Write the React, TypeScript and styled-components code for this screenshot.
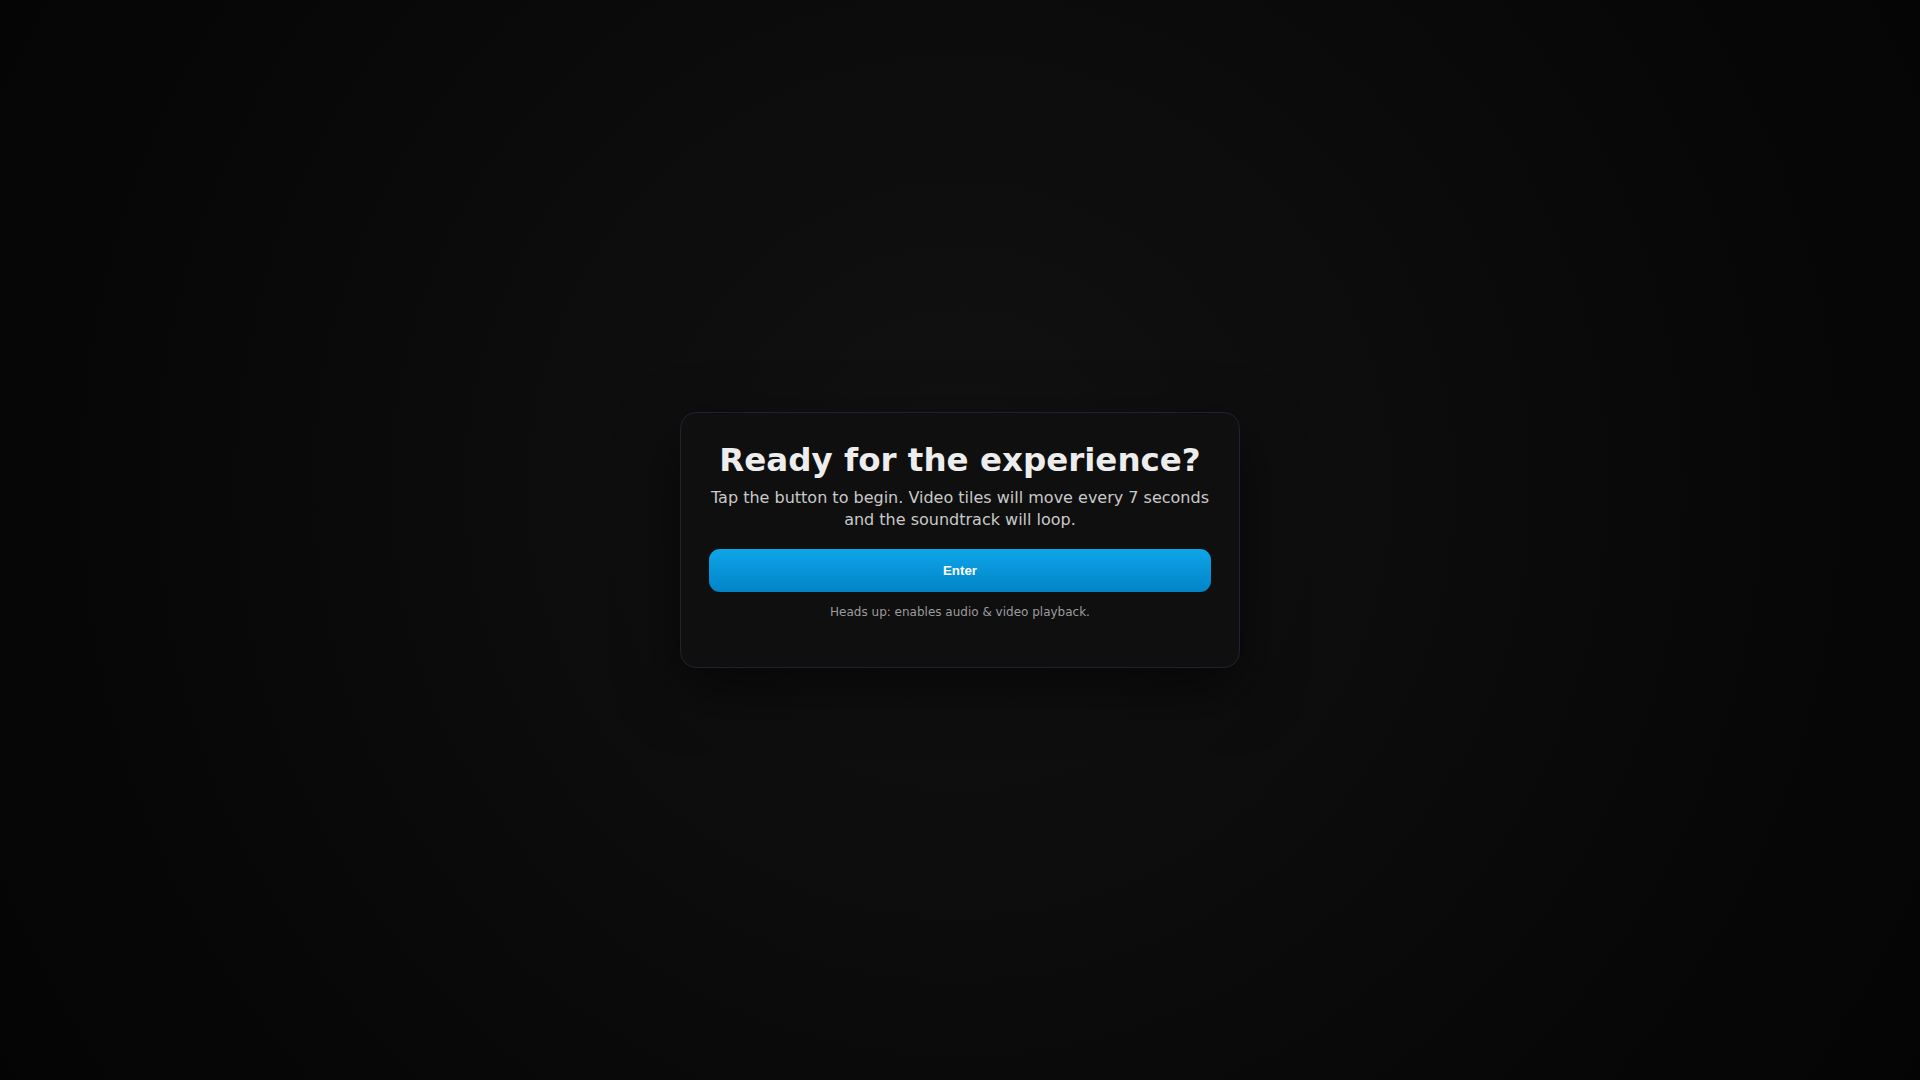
import styled, { createGlobalStyle } from "styled-components";

const GlobalStyle = createGlobalStyle`
  html, body {
    margin: 0;
    padding: 0;
    height: 100%;
  }
  body {
    font-family: "DejaVu Sans", sans-serif;
    background: #050505;
  }
  #root {
    height: 100%;
  }
`;

const Page = styled.div`
  min-height: 100vh;
  display: flex;
  align-items: center;
  justify-content: center;
  background: radial-gradient(circle at 50% 45%, #121212 0%, #0b0b0b 45%, #040404 100%);
`;

const Card = styled.div`
  width: 560px;
  box-sizing: border-box;
  padding: 28px 28px 48px;
  background: #0f0f10;
  border: 1px solid #1c2430;
  border-radius: 16px;
  box-shadow: 0 20px 60px rgba(0, 0, 0, 0.55);
  text-align: center;
  color: #ececec;
`;

const Title = styled.h1`
  margin: 0 0 7px;
  font-size: 32.5px;
  font-weight: 700;
  line-height: 1.2;
  color: #ededed;
`;

const Lead = styled.p`
  margin: 0 0 18px;
  font-size: 16px;
  line-height: 22px;
  color: #c9c9c9;
`;

const EnterButton = styled.button`
  display: block;
  width: 100%;
  padding: 14px 16px;
  border: none;
  border-radius: 11px;
  background: linear-gradient(180deg, #0ea5e9 0%, #0284c7 100%);
  color: #ffffff;
  font-family: "Liberation Sans", Arial, sans-serif;
  font-size: 13.33px;
  font-weight: 700;
  cursor: pointer;
`;

const Note = styled.p`
  margin: 13px 0 0;
  font-size: 12px;
  color: #9b9b9b;
`;

const App = () => {
  return (
    <>
      <GlobalStyle />
      <Page>
        <Card>
          <Title>Ready for the experience?</Title>
          <Lead>
            Tap the button to begin. Video tiles will move every 7 seconds and
            the soundtrack will loop.
          </Lead>
          <EnterButton>Enter</EnterButton>
          <Note>Heads up: enables audio &amp; video playback.</Note>
        </Card>
      </Page>
    </>
  );
};

export default App;
